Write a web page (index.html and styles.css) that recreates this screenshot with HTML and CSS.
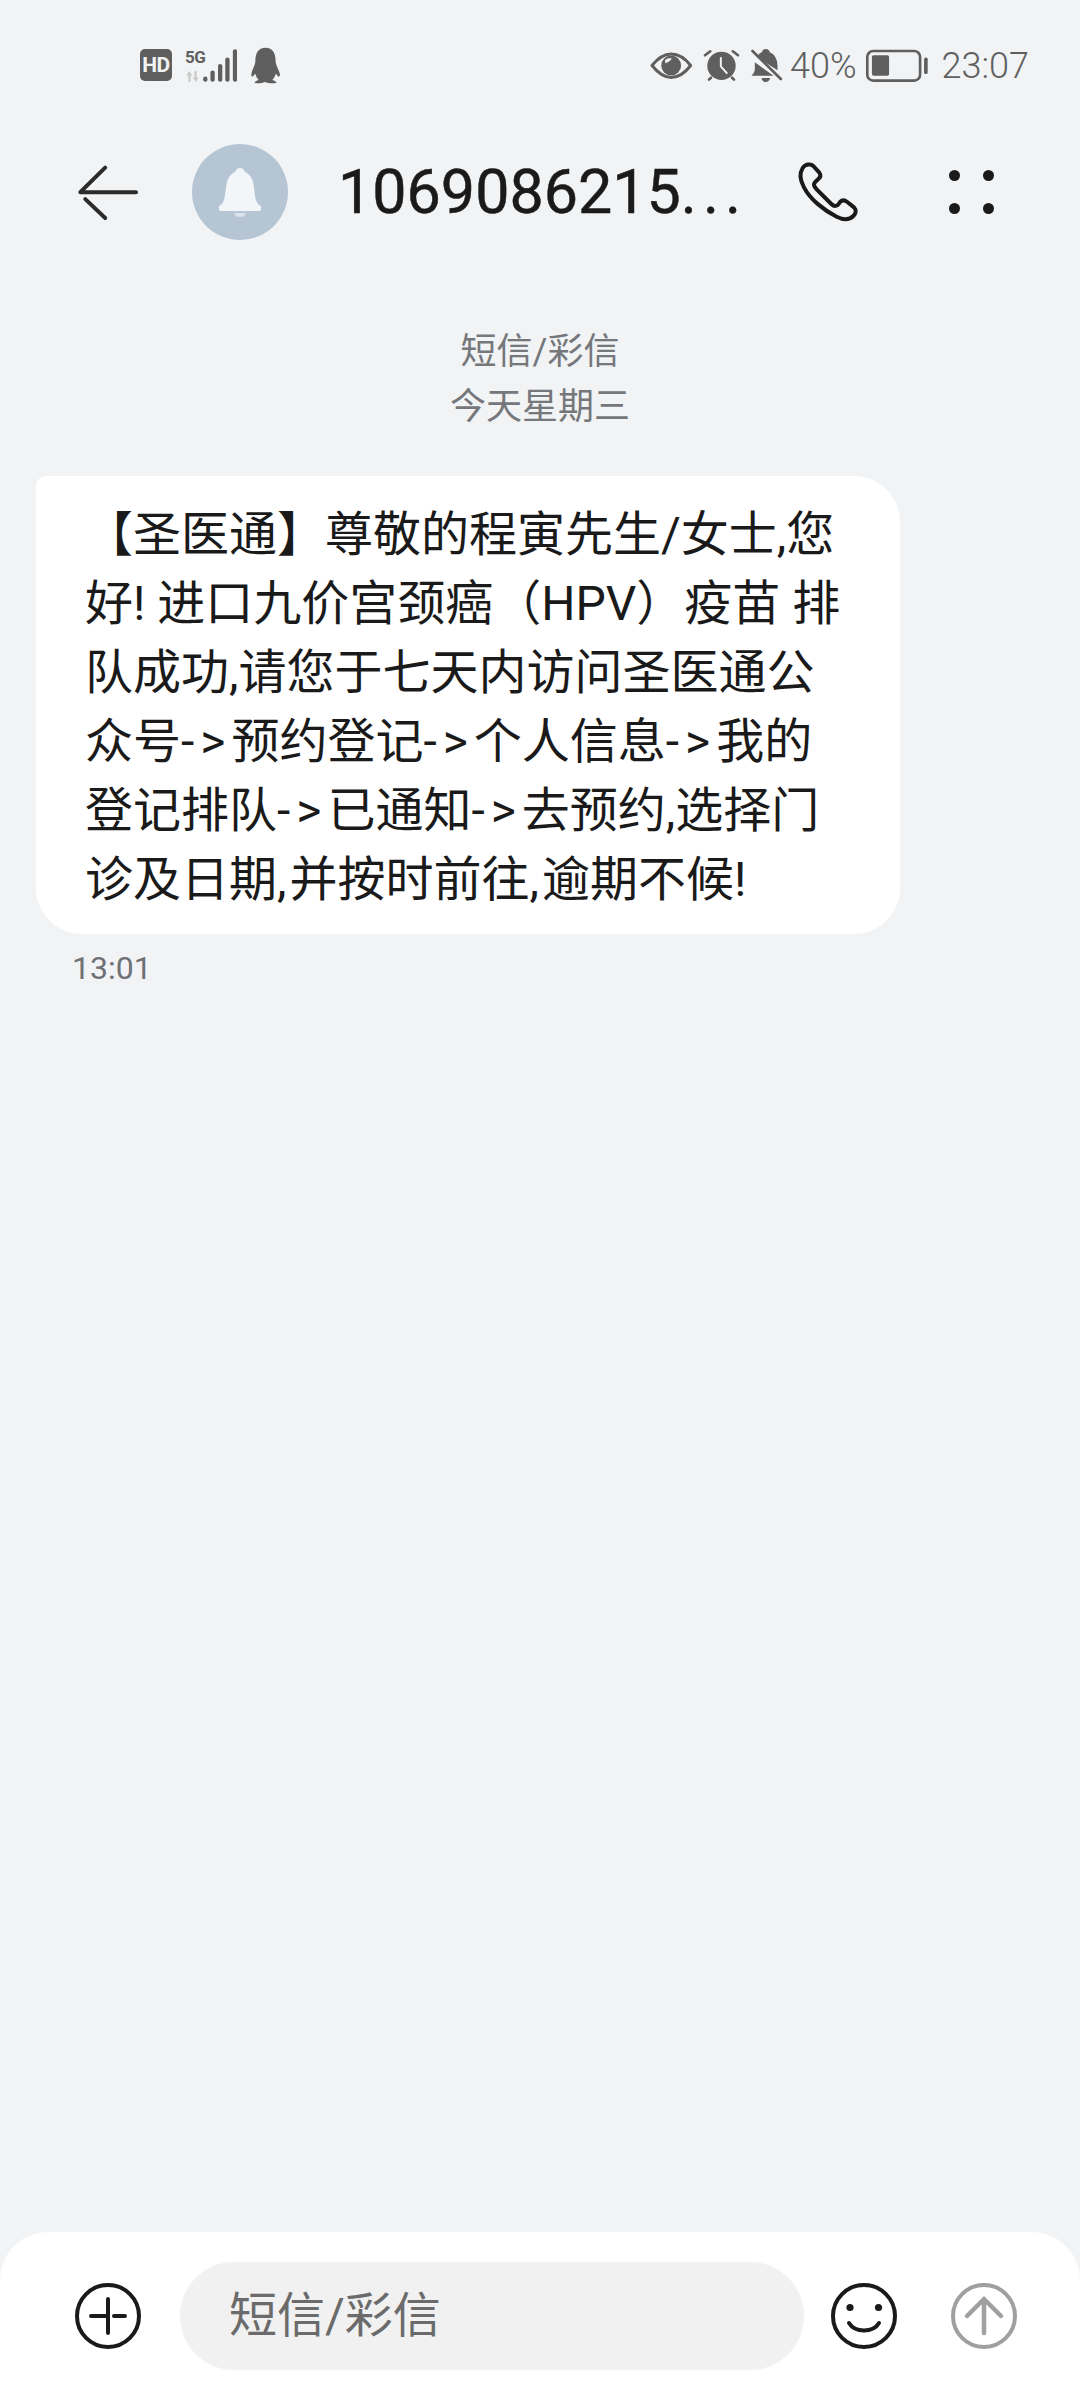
FILE: index.html
```html
<!DOCTYPE html>
<html lang="zh-CN">
<head>
    <meta charset="UTF-8">
    <meta name="viewport" content="width=device-width, initial-scale=1.0">
    <title>短信/彩信</title>
    <link rel="stylesheet" href="styles.css">
</head>
<body>
    <div class="status-bar">
        <div class="status-left">
            <span class="hd-badge">HD</span>
            <div class="signal">
                <div class="signal-labels">
                    <span class="label-5g">5G</span>
                    <svg class="updown" viewBox="0 0 46 34">
                        <path d="M13 0 L22 14 H17 V34 H10 V14 H4Z M33 34 L24 20 H29 V0 H36 V20 H42Z" fill="#c9c9c9"/>
                    </svg>
                </div>
                <svg class="bars" viewBox="0 0 103 100">
                    <g fill="none" stroke="#5f5f5f" stroke-width="13" stroke-linecap="round">
                        <path d="M7 90 V93"/><path d="M29 72 V93"/><path d="M52 52 V93"/><path d="M74 32 V93"/><path d="M97 7 V93"/>
                    </g>
                </svg>
            </div>
            <svg class="penguin" viewBox="390 50 92 110">
                <path fill="#5f5f5f" d="M436 52 C414 52 406 70 406 90 C406 100 402 106 396 122 C392 134 394 142 400 136 C402 132 404 130 406 130 C408 138 412 144 416 148 C408 150 402 154 404 157 C414 159 426 158 434 154 C442 158 458 159 468 157 C470 154 464 150 456 148 C460 144 464 138 466 130 C468 130 470 132 472 136 C478 142 482 134 476 122 C470 106 466 100 466 90 C466 70 458 52 436 52Z"/>
            </svg>
        </div>
        <div class="status-right">
            <svg class="ic-eye" viewBox="58 62 130 86">
                <path fill="none" stroke="#5f5f5f" stroke-width="9" stroke-linejoin="round" d="M64 105 C84 80 102 70 122 70 C142 70 162 80 181 105 C162 130 142 141 122 141 C102 141 84 130 64 105Z"/>
                <circle cx="122" cy="105" r="30" fill="#5f5f5f"/>
                <path fill="#f1f3f5" d="M104 88 C110 82 118 82 124 84 C120 92 112 96 104 98Z"/>
            </svg>
            <svg class="ic-alarm" viewBox="216 55 112 100">
                <circle cx="272" cy="106" r="43" fill="#5f5f5f"/>
                <path fill="none" stroke="#5f5f5f" stroke-width="8" stroke-linecap="round" d="M222 74 L238 62 M322 74 L306 62 M234 148 L240 142 M310 148 L304 142"/>
                <path fill="none" stroke="#f1f3f5" stroke-width="6" stroke-linecap="round" d="M270 82 V108 L288 128"/>
            </svg>
            <svg class="ic-mute" viewBox="358 55 98 105">
                <path fill="#5f5f5f" d="M405 58 C412 58 416 62 417 68 C432 74 440 90 440 108 V122 L378 82 C382 74 388 70 394 67 C395 62 398 58 405 58Z M372 98 L428 138 H362 C366 134 372 128 372 118Z"/>
                <path fill="#5f5f5f" d="M392 145 H418 C416 153 411 157 405 157 C399 157 394 153 392 145Z"/>
                <path fill="none" stroke="#5f5f5f" stroke-width="8" stroke-linecap="round" d="M365 64 L450 148"/>
            </svg>
            <span class="battery-pct">40%</span>
            <svg class="ic-battery" viewBox="704 56 192 100">
                <rect x="710" y="62" width="160" height="90" rx="18" fill="none" stroke="#5f5f5f" stroke-width="8"/>
                <rect x="724" y="75" width="52" height="62" rx="5" fill="#5f5f5f"/>
                <rect x="882" y="82" width="11" height="50" rx="5" fill="#5f5f5f"/>
            </svg>
            <span class="clock">23:07</span>
        </div>
    </div>

    <div class="app-bar">
        <svg class="ic-back" viewBox="80 130 190 170">
            <path fill="none" stroke="#2b2b2b" stroke-width="12" stroke-linecap="round" stroke-linejoin="round" d="M258 214 H90 L165 140 M105 235 L165 292"/>
        </svg>
        <div class="avatar">
            <svg class="avatar-bell" viewBox="0 0 46 50">
                <path fill="#f3f6f9" d="M23 1 C26 1 27 3 28 5 C33 7 36 12 37 20 C38 28 38 34 42 38 C45 38 45 44 42 44 H4 C1 44 1 38 4 38 C8 34 8 28 9 20 C10 12 13 7 18 5 C19 3 20 1 23 1Z"/>
                <path fill="#d9e3ec" d="M17 46 H29 C28 49 26 50 23 50 C20 50 18 49 17 46Z"/>
            </svg>
        </div>
        <h1 class="contact-name">1069086215<span class="name-dots">...</span></h1>
        <svg class="ic-phone" viewBox="105 88 195 195">
            <path fill="none" stroke="#1a1a1a" stroke-width="12" stroke-linejoin="round" d="M128 112 C136 100 152 98 160 106 L178 126 C184 134 180 142 172 148 L164 156 C160 162 164 170 170 176 L214 220 C222 228 230 228 236 220 L240 214 C246 208 254 208 262 214 L282 230 C290 238 288 248 280 256 C268 268 250 268 230 258 C190 238 150 205 132 170 C120 148 118 128 128 112Z"/>
        </svg>
        <div class="more-grid">
            <span class="more-dot"></span><span class="more-dot"></span>
            <span class="more-dot"></span><span class="more-dot"></span>
        </div>
    </div>

    <div class="thread">
        <div class="thread-head">
            <div>短信/彩信</div>
            <div>今天星期三</div>
        </div>
        <div class="bubble">【圣医通】尊敬的程寅先生/女士,您<br>好! 进口九价宫颈癌（HPV）疫苗 排<br>队成功,请您于七天内访问圣医通公<br>众号<span class="arrow">-&gt;</span>预约登记<span class="arrow">-&gt;</span>个人信息<span class="arrow">-&gt;</span>我的<br>登记排队<span class="arrow">-&gt;</span>已通知<span class="arrow">-&gt;</span>去预约,选择门<br>诊及日期<span class="comma">,</span>并按时前往<span class="comma">,</span>逾期不候!</div>
        <div class="msg-time">13:01</div>
    </div>

    <div class="composer">
        <svg class="ic-round" viewBox="0 0 66 66">
            <circle cx="33" cy="33" r="31" fill="none" stroke="#1a1a1a" stroke-width="4"/>
            <path fill="none" stroke="#1a1a1a" stroke-width="4" stroke-linecap="round" d="M16 33 H33 M39 33 H50 M33 16 V50"/>
        </svg>
        <div class="input-pill">短信/彩信</div>
        <svg class="ic-round ic-smile" viewBox="0 0 66 66">
            <circle cx="33" cy="33" r="31" fill="none" stroke="#1a1a1a" stroke-width="4"/>
            <circle cx="19" cy="24.500" r="3.600" fill="#1a1a1a"/>
            <circle cx="47.500" cy="24.500" r="3.600" fill="#1a1a1a"/>
            <path fill="none" stroke="#1a1a1a" stroke-width="4" stroke-linecap="round" d="M18 40 C24 50 42 50 48 40"/>
        </svg>
        <svg class="ic-round ic-send" viewBox="0 0 66 66">
            <circle cx="33" cy="33" r="31" fill="none" stroke="#a0a0a0" stroke-width="4"/>
            <path fill="none" stroke="#a0a0a0" stroke-width="4.500" stroke-linecap="round" stroke-linejoin="round" d="M33 50 V16 M16 33 L33 16 L50 33"/>
        </svg>
    </div>
</body>
</html>
```

FILE: styles.css
```css
* {
    margin: 0;
    padding: 0;
    box-sizing: border-box;
}

body {
    font-family: Roboto, "Noto Sans CJK SC", sans-serif;
    background: #f1f3f5;
    color: #1a1a1a;
    width: 1080px;
    height: 2400px;
    display: flex;
    flex-direction: column;
    overflow: hidden;
}

/* status bar */
.status-bar {
    height: 130px;
    display: flex;
    align-items: center;
    justify-content: space-between;
    padding: 0 51px 0 140px;
    color: #5f5f5f;
}

.status-left,
.status-right {
    display: flex;
    align-items: center;
}

.hd-badge {
    width: 32px;
    height: 32px;
    border-radius: 5px;
    background: #5f5f5f;
    color: #f1f3f5;
    font-size: 21px;
    font-weight: 700;
    line-height: 32px;
    text-align: center;
    letter-spacing: -0.5px;
}

.signal {
    display: flex;
    align-items: flex-end;
    margin-left: 13px;
}

.signal-labels {
    display: flex;
    flex-direction: column;
    width: 17px;
}

.label-5g {
    font-size: 17px;
    font-weight: 700;
    line-height: 17px;
    letter-spacing: -0.5px;
    margin-bottom: 5px;
    white-space: nowrap;
}

.updown {
    width: 15px;
    height: 11px;
}

.bars {
    width: 34px;
    height: 33px;
    margin-left: 1px;
}

.penguin {
    width: 31px;
    height: 37px;
    margin-left: 13px;
}

.ic-eye {
    width: 43px;
    height: 29px;
}

.ic-alarm {
    width: 37px;
    height: 33px;
    margin-left: 10px;
}

.ic-mute {
    width: 33px;
    height: 35px;
    margin-left: 10px;
}

.battery-pct {
    font-size: 36px;
    font-weight: 300;
    margin-left: 7px;
    padding-top: 2px;
}

.ic-battery {
    width: 64px;
    height: 33px;
    margin-left: 8px;
}

.clock {
    font-size: 36px;
    font-weight: 300;
    margin-left: 13px;
    padding-top: 2px;
}

/* top bar */
.app-bar {
    height: 124px;
    display: flex;
    align-items: center;
    padding-left: 77px;
}

.ic-back {
    width: 63px;
    height: 57px;
}

.avatar {
    width: 96px;
    height: 96px;
    margin-left: 52px;
    border-radius: 50%;
    background: #b6c5d4;
    display: flex;
    align-items: center;
    justify-content: center;
}

.avatar-bell {
    width: 46px;
    height: 50px;
}

.contact-name {
    width: 404px;
    margin-left: 50px;
    font-size: 61px;
    font-weight: 400;
    white-space: nowrap;
    -webkit-text-stroke: 0.5px #1a1a1a;
}

.name-dots {
    letter-spacing: 6px;
}

.ic-phone {
    width: 65px;
    height: 65px;
    margin-left: 53px;
}

.more-grid {
    width: 45px;
    margin-left: 89px;
    display: grid;
    grid-template-columns: 11px 11px;
    justify-content: space-between;
    row-gap: 22px;
}

.more-dot {
    width: 11px;
    height: 11px;
    border-radius: 50%;
    background: #1a1a1a;
}

/* messages */
.thread {
    flex: 1;
    padding: 71px 36px 0;
}

.thread-head {
    font-size: 36px;
    line-height: 55px;
    color: #75777b;
    text-align: center;
}

.bubble {
    width: 864px;
    margin-top: 41px;
    padding: 24px 0 20px 49px;
    background: #fff;
    border-radius: 10px 46px 46px 46px;
    font-size: 48px;
    line-height: 69px;
    white-space: nowrap;
}

.arrow {
    letter-spacing: 6px;
}

.comma {
    letter-spacing: 3px;
}

.msg-time {
    margin: 14px 0 0 36px;
    font-size: 32px;
    line-height: 40px;
    color: #6f7175;
}

/* input row */
.composer {
    height: 168px;
    background: #fff;
    border-radius: 48px 48px 0 0;
    display: flex;
    align-items: center;
    padding-left: 75px;
}

.ic-round {
    width: 66px;
    height: 66px;
}

.input-pill {
    width: 624px;
    height: 108px;
    margin-left: 39px;
    padding-left: 49px;
    background: #f1f1f1;
    border-radius: 54px;
    font-size: 48px;
    line-height: 108px;
    color: #6b6b6b;
}

.ic-smile {
    margin-left: 27px;
}

.ic-send {
    margin-left: 54px;
}
```
